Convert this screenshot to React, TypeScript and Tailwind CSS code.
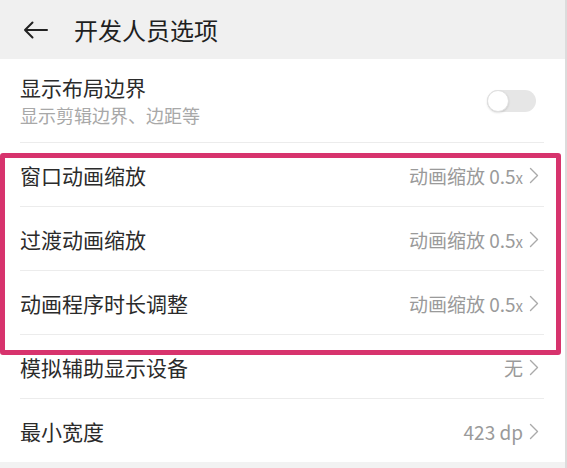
import React from "react";

const Chevron = () => (
  <svg width="10" height="17" viewBox="0 0 10 17" fill="none" className="ml-[6px] shrink-0">
    <polyline points="1.5,1.5 8.5,8.5 1.5,15.5" stroke="#aaaaaa" strokeWidth="1.4" strokeLinecap="round" strokeLinejoin="round" />
  </svg>
);

const Divider = () => <div className="ml-[20px] mr-[21px] h-px bg-[#ececec]" />;

const scale = (
  <>
    动画缩放 0.5<span className="text-[15px]">x</span>
  </>
);

const rows: { label: string; value: React.ReactNode }[] = [
  { label: "窗口动画缩放", value: scale },
  { label: "过渡动画缩放", value: scale },
  { label: "动画程序时长调整", value: scale },
  { label: "模拟辅助显示设备", value: "无" },
  { label: "最小宽度", value: "423 dp" },
];

export default function App() {
  return (
    <div
      className="relative h-[468px] w-[567px] overflow-hidden border-r-2 border-[#dcdcdc] bg-[#f2f2f2]"
      style={{ fontFamily: '"Noto Sans CJK SC", "Noto Sans", sans-serif' }}
    >
      {/* header */}
      <div className="flex h-[59px] items-center bg-[#f0f0f0] pl-[23px]">
        <svg width="25" height="18" viewBox="0 0 25 18" fill="none">
          <path d="M24 9H2M9.5 1.5L2 9l7.5 7.5" stroke="#222" strokeWidth="2" strokeLinecap="round" strokeLinejoin="round" />
        </svg>
        <span className="ml-[26px] text-[24px] leading-none text-[#1f1f1f]">开发人员选项</span>
      </div>

      <div className="bg-white">
        {/* layout bounds */}
        <div className="flex items-center justify-between pb-[15px] pl-[20px] pr-[29px] pt-[15px]">
          <div className="flex flex-col">
            <span className="text-[21px] leading-[26px] text-[#2b2b2b]">显示布局边界</span>
            <span className="mt-[4px] text-[18px] leading-[23px] text-[#a8a8a8]">显示剪辑边界、边距等</span>
          </div>
          <div className="relative h-[22px] w-[49px] rounded-full bg-[#e6e6e6]">
            <div className="absolute left-0 top-0 h-[22px] w-[22px] rounded-full border border-[#e0e0e0] bg-white shadow-[0_1px_2px_rgba(0,0,0,0.12)]" />
          </div>
        </div>
        <Divider />

        {rows.map((r, i) => (
          <div key={r.label}>
            <div className="flex h-[63px] items-center justify-between pl-[20px] pr-[26px] pt-[1px]">
              <span className="text-[21px] leading-none text-[#2b2b2b]">{r.label}</span>
              <div className="flex items-center">
                <span className="text-[19px] leading-none text-[#9a9a9a]">{r.value}</span>
                <Chevron />
              </div>
            </div>
            {i < rows.length - 1 && <Divider />}
          </div>
        ))}
      </div>

      {/* highlight annotation */}
      <div className="pointer-events-none absolute left-0 top-[153px] h-[202px] w-[561px] rounded-[3px] border-[5px] border-[#d7336d]" />
    </div>
  );
}
